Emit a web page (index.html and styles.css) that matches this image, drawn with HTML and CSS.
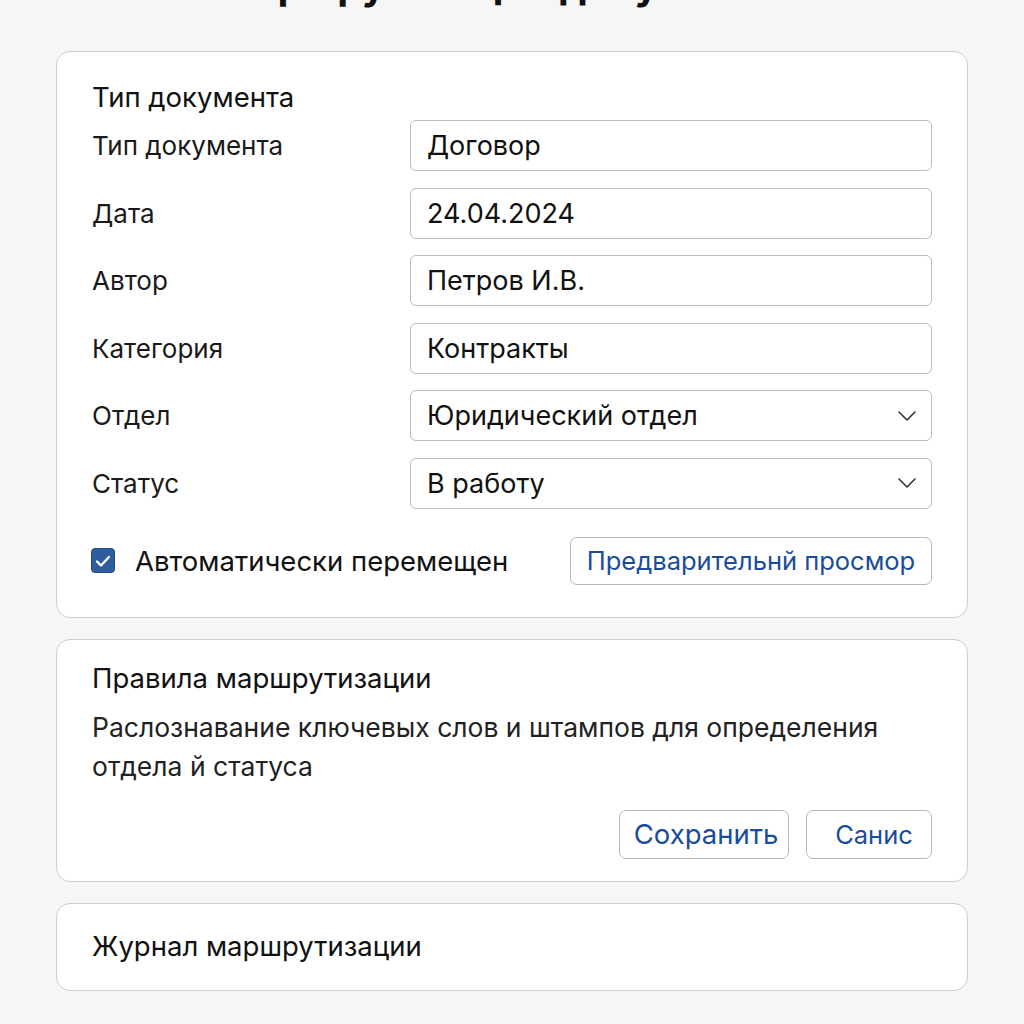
FILE: index.html
```html
<!DOCTYPE html>
<html lang="ru">
<head>
<meta charset="utf-8">
<link rel="stylesheet" href="styles.css">
</head>
<body>
<div class="page">
  <h1 class="page-title">Маршрутизация документов</h1>

  <section class="card card-doc">
    <h2 class="card-title">Тип документа</h2>
    <div class="form">
      <label class="label">Тип документа</label>
      <div class="field">Договор</div>
      <label class="label">Дата</label>
      <div class="field">24.04.2024</div>
      <label class="label">Автор</label>
      <div class="field">Петров И.В.</div>
      <label class="label">Категория</label>
      <div class="field">Контракты</div>
      <label class="label">Отдел</label>
      <div class="field select"><span>Юридический отдел</span>
        <svg class="chev" width="20" height="12" viewBox="0 0 20 12"><polyline points="2,2 10,10 18,2" fill="none" stroke="#333" stroke-width="1.6" stroke-linecap="round" stroke-linejoin="round"/></svg>
      </div>
      <label class="label">Статус</label>
      <div class="field select"><span>В работу</span>
        <svg class="chev" width="20" height="12" viewBox="0 0 20 12"><polyline points="2,2 10,10 18,2" fill="none" stroke="#333" stroke-width="1.6" stroke-linecap="round" stroke-linejoin="round"/></svg>
      </div>
    </div>
    <div class="check-row">
      <label class="check">
        <span class="box"><svg width="18" height="16" viewBox="0 0 18 16"><polyline points="3,8.5 7,12.5 15,4" fill="none" stroke="#fff" stroke-width="2.4" stroke-linecap="round" stroke-linejoin="round"/></svg></span>
        <span class="check-text">Автоматически перемещен</span>
      </label>
      <button class="btn btn-preview">Предварительнй просмор</button>
    </div>
  </section>

  <section class="card card-rules">
    <h2 class="card-title">Правила маршрутизации</h2>
    <p class="desc">Раслознавание ключевых слов и штампов для определения отдела й статуса</p>
    <div class="actions">
      <button class="btn btn-save">Сохранить</button>
      <button class="btn btn-cancel">Санис</button>
    </div>
  </section>

  <section class="card card-log">
    <h2 class="card-title">Журнал маршрутизации</h2>
  </section>
</div>
</body>
</html>
```

FILE: styles.css
```css
* { box-sizing: border-box; }
html, body { margin: 0; padding: 0; }
body {
  background: #f6f6f6;
  font-family: Inter, "Noto Sans", "Liberation Sans", sans-serif;
  color: #111;
  overflow: hidden;
}
.page {
  padding: 0 56px;
  display: flex;
  flex-direction: column;
  gap: 21px;
}
.page-title {
  margin: -37px 0 23px;
  font-size: 40px;
  line-height: 44px;
  font-weight: 700;
  text-align: center;
  color: #111;
  height: 44px;
}
.card {
  background: #fff;
  border: 1.5px solid #cdcdcd;
  border-radius: 14px;
  padding: 0 35px;
}
.card-title {
  margin: 0;
  font-size: 27.5px;
  line-height: 30px;
  font-weight: 400;
  color: #111;
}
.card-doc { padding-top: 30px; padding-bottom: 32px; }
.form {
  margin-top: 8px;
  display: grid;
  grid-template-columns: 318px 1fr;
  row-gap: 16.6px;
  align-items: center;
}
.label {
  font-size: 26px;
  color: #1a1a1a;
}
.field {
  height: 51px;
  border: 1px solid #bcbcbc;
  border-radius: 6px;
  padding: 0 16px;
  display: flex;
  align-items: center;
  font-size: 27px;
  color: #111;
  background: #fff;
}
.select { justify-content: space-between; }
.chev { margin-right: -2px; }
.check-row {
  margin-top: 28px;
  display: flex;
  justify-content: space-between;
  align-items: center;
}
.check {
  display: flex;
  align-items: center;
  gap: 20px;
}
.box {
  width: 24px;
  height: 25px;
  margin-left: -1px;
  border-radius: 4px;
  background: #2f5c9f;
  border: 1px solid #24497f;
  display: flex;
  align-items: center;
  justify-content: center;
}
.check-text {
  font-size: 27.5px;
  color: #111;
}
.btn {
  font-family: inherit;
  background: #fff;
  border: 1px solid #b8b8b8;
  border-radius: 7px;
  color: #1a4c9c;
  cursor: pointer;
}
.btn-preview {
  width: 362px;
  height: 48px;
  font-size: 25.5px;
  padding: 0;
}
.card-rules { padding-top: 23px; padding-bottom: 22px; }
.desc {
  margin: 15px 0 0;
  font-size: 26.5px;
  line-height: 39px;
  color: #222;
  max-width: 830px;
}
.actions {
  margin-top: 24px;
  display: flex;
  justify-content: flex-end;
  gap: 17px;
}
.btn-save {
  width: 170px;
  height: 49px;
  font-size: 27.5px;
  padding: 0 0 0 4px;
}
.btn-cancel {
  width: 126px;
  height: 49px;
  font-size: 25.5px;
  padding: 0 0 0 10px;
}
.card-log {
  height: 88px;
  display: flex;
  align-items: center;
  padding-bottom: 2px;
}
.card-log .card-title { font-size: 27.5px; }
```
